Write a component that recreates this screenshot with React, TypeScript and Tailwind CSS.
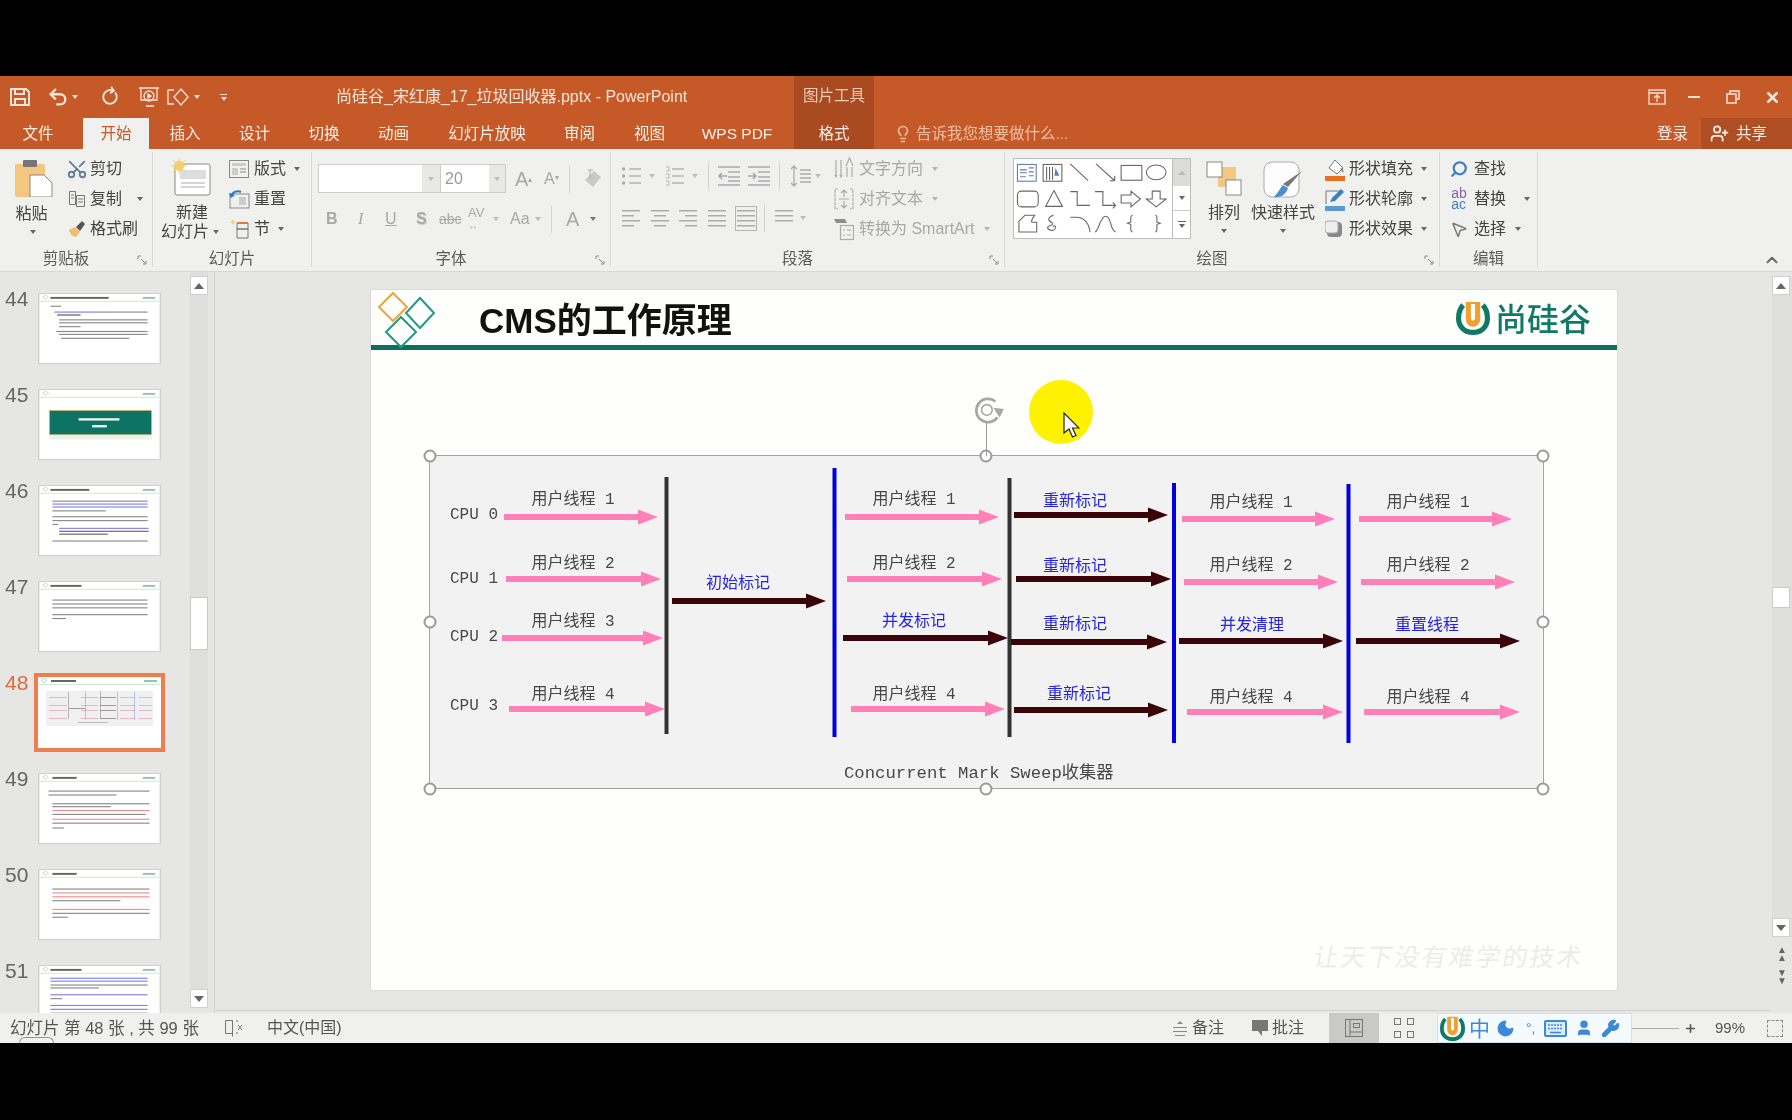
import { Moon, MousePointer2, Plus, RotateCcw, Scissors, Search, Undo2, User, UserPlus, Wrench, X, ChevronUp, Lightbulb } from "lucide-react";
import type { ReactNode } from "react";

const TABS = [
  { label: "文件", w: "w-[83px] pr-[7px]" },
  { label: "开始", w: "w-[66px]", active: true },
  { label: "插入", w: "w-[72px]" },
  { label: "设计", w: "w-[67px]" },
  { label: "切换", w: "w-[72px]" },
  { label: "动画", w: "w-[67px]" },
  { label: "幻灯片放映", w: "w-[120px]" },
  { label: "审阅", w: "w-[65px]" },
  { label: "视图", w: "w-[75px]" },
  { label: "WPS PDF", w: "w-[107px] pr-[7px]" },
];

function Caret({ color = "border-t-[#666]", className = "" }: { color?: string; className?: string }) {
  return <span className={`inline-block h-0 w-0 border-x-[3.5px] border-t-[4px] border-x-transparent ${color} ${className}`} />;
}

function ULogo({ size }: { size: number }) {
  return (
    <svg width={size} height={size} viewBox="0 0 33 33">
      <path d="M7 4C3 8 2.5 13 2.5 17c0 8 6 13.5 14 13.5S30.5 25 30.5 17c0-4-.5-9-4.500-13" fill="none" stroke="#0f7a64" strokeWidth="5" />
      <path d="M9.500 1h14v16c0 5-3 8-7 8s-7-3-7-8z" fill="#f0a030" />
      <path d="M14.500 3h4v13c0 2-1 3-2 3s-2-1-2-3z" fill="#fff" />
    </svg>
  );
}

/* ---------- thumbnails ---------- */

type Line = [number, number, number, string?];
const D = "#666";
const B = "#5a5ae8";
const R = "#ee6a6a";

const THUMB_LINES: Record<number, Line[]> = {
  44: [[11, 12, 11], [15, 18, 47, B], [62, 18, 49], [18, 21, 24, "#222"], [20, 26, 91], [20, 29, 91], [20, 33, 22], [17, 38, 94], [20, 41, 91], [22, 45, 70]],
  46: [[13, 15, 98], [13, 18, 98, B], [13, 21, 98, B], [13, 25, 55], [13, 31, 98], [13, 35, 98], [13, 39, 6], [20, 43, 92, B], [20, 46, 92, "#333"], [20, 49, 50, "#333"], [13, 56, 98]],
  47: [[13, 18, 98], [13, 22, 98], [13, 26, 98], [13, 33, 98], [13, 37, 14]],
  49: [[9, 17, 104], [9, 21, 70], [13, 30, 100], [13, 33, 60], [13, 37, 100, R], [13, 41, 96], [13, 46, 100, R], [13, 50, 100], [13, 55, 12]],
  50: [[13, 19, 100], [13, 23, 100, R], [13, 27, 100, R], [13, 31, 70], [13, 40, 100, R], [13, 44, 100], [13, 48, 16]],
  51: [[11, 12, 100, B], [11, 15, 100, B], [11, 19, 100], [11, 22, 50], [11, 29, 100, B], [11, 33, 12], [11, 40, 100, B], [11, 44, 100, B], [11, 48, 100], [11, 52, 100]],
};

const TITLE_W: Record<number, [number, number]> = {
  44: [11, 60], 45: [0, 0], 46: [11, 40], 47: [11, 32], 48: [13, 25], 49: [13, 25], 50: [13, 25], 51: [11, 32],
};

function ThumbArt({ n }: { n: number }) {
  const [tx, tw] = TITLE_W[n];
  return (
    <svg viewBox="0 0 123 71" className="h-full w-full">
      <rect width="123" height="71" fill="#fff" />
      <path d="M3 3l3-2 3 2-3 3z" fill="none" stroke="#9bcfc2" strokeWidth="0.7" />
      <rect x="0" y="7" width="123" height="1" fill="#cfe8df" />
      {tw > 0 && <rect x={tx} y="3" width={tw} height="2" fill="#666" />}
      <rect x="106" y="3" width="13" height="2" fill="#8fc8b0" />
      {(THUMB_LINES[n] ?? []).map(([x, y, w, c], i) => (
        <rect key={i} x={x} y={y} width={w} height="1.200" fill={c ?? D} opacity="0.75" />
      ))}
      {n === 45 && (
        <g>
          <rect x="10" y="44" width="105" height="7" fill="#d9ece6" opacity="0.6" />
          <rect x="10" y="21" width="105" height="25" fill="#0d7463" stroke="#d8b36a" strokeWidth="0.8" />
          <rect x="40" y="29" width="42" height="2.500" fill="#e6f2ee" />
          <rect x="54" y="36" width="15" height="2.500" fill="#e6f2ee" />
        </g>
      )}
      {n === 48 && (
        <g>
          <rect x="8" y="14" width="107" height="35" fill="#f0f0f0" />
          {[20, 28, 33, 41].map((y) => (
            <g key={y}>
              <rect x="11" y={y} width="18" height="0.700" fill="#e79ab8" />
              <rect x="43" y={y} width="17" height="0.700" fill="#e79ab8" />
              <rect x="62" y={y} width="16" height="0.700" fill="#777" />
              <rect x="82" y={y} width="15" height="0.700" fill="#e79ab8" />
              <rect x="101" y={y} width="13" height="0.700" fill="#e79ab8" />
            </g>
          ))}
          <rect x="31" y="31" width="16" height="0.700" fill="#777" />
          <rect x="30" y="15" width="0.500" height="27" fill="#777" />
          <rect x="47" y="14" width="0.500" height="28" fill="#88e" />
          <rect x="62" y="14" width="0.500" height="28" fill="#777" />
          <rect x="79" y="15" width="0.500" height="28" fill="#88e" />
          <rect x="96" y="15" width="0.500" height="28" fill="#88e" />
          <rect x="40" y="45" width="30" height="1" fill="#bbb" />
        </g>
      )}
    </svg>
  );
}

function ThumbList() {
  return (
    <div className="flex w-[190px] flex-col overflow-hidden pt-[21px]">
      {[44, 45, 46, 47, 48, 49, 50, 51].map((n) => (
        <div key={n} className="flex h-[96px] shrink-0 items-start">
          <span className={`-mt-[5px] w-[34px] pl-[5px] text-[21px] leading-[21px] ${n === 48 ? "text-[#e0683a]" : "text-[#666]"}`}>{n}</span>
          <div className={n === 48 ? "-my-1 h-[79px] w-[131px] shrink-0 border-4 border-[#ef7e4e]" : "ml-1 h-[71px] w-[123px] shrink-0 border border-[#cfcfcf]"}>
            <ThumbArt n={n} />
          </div>
        </div>
      ))}
    </div>
  );
}

function ScrollButton({ down }: { down?: boolean }) {
  return (
    <div className="flex h-[19px] w-[18px] items-center justify-center border border-[#cfcfcf] bg-white">
      <span className={`h-0 w-0 border-x-[5px] border-x-transparent ${down ? "border-t-[6px] border-t-[#666]" : "border-b-[6px] border-b-[#666]"}`} />
    </div>
  );
}

/* ---------- ribbon ---------- */

function Launcher() {
  return (
    <svg width="10" height="10" viewBox="0 0 10 10" className="absolute bottom-[2px] right-[5px]">
      <path d="M1 4V1h3M9 6v3H6M4 4l4 4" fill="none" stroke="#888" strokeWidth="1" />
    </svg>
  );
}

function Group({ w, label, launcher, children }: { w: string; label?: string; launcher?: boolean; children?: ReactNode }) {
  return (
    <div className={`relative flex h-[115px] shrink-0 flex-col border-r border-[#d9dad8] ${w}`}>
      <div className="-mt-[3px] flex h-[100px] shrink-0 pt-[1px]">{children}</div>
      <div className={`text-center text-[15.500px] leading-[20px] text-[#5a5a5a] ${launcher ? "pr-[20px]" : ""}`}>{label}</div>
      {launcher && <Launcher />}
    </div>
  );
}

function SmallRow({ icon, label, caret, gap = "gap-[4px]", muted, iconW = "w-[24px]" }: { icon: ReactNode; label: string; caret?: string; gap?: string; muted?: boolean; iconW?: string }) {
  return (
    <div className={`flex h-[30px] items-center ${gap} text-[16px] ${muted ? "text-[#a8a8a8]" : "text-[#444]"}`}>
      <span className={`flex ${iconW} shrink-0 items-center justify-center`}>{icon}</span>
      <span className="whitespace-nowrap">{label}</span>
      {caret && <Caret className={caret} color={muted ? "border-t-[#b5b5b5]" : "border-t-[#666]"} />}
    </div>
  );
}

const GRAY = "#ababab";

function ListIcon({ numbered }: { numbered?: boolean }) {
  return (
    <svg width="19" height="22" fill="none" stroke={GRAY} strokeWidth="1.300">
      {[4, 11, 18].map((y) => (
        <g key={y}>
          {numbered ? <path d={`M1 ${y - 2}h3v4H1`} strokeWidth="0.800" /> : <rect x="0" y={y - 1.500} width="3" height="3" fill={GRAY} stroke="none" />}
          <path d={`M7 ${y}h12`} />
        </g>
      ))}
    </svg>
  );
}

function IndentIcon({ out }: { out?: boolean }) {
  return (
    <svg width="22" height="22" fill="none" stroke={GRAY} strokeWidth="1.300">
      <path d="M0 2h22M10 7h12M10 12h12M10 16h12M0 20h22" />
      <path d={out ? "M9 11H1M4 8l-3 3 3 3" : "M0 11h8M5 8l3 3-3 3"} stroke="#a0a8b0" strokeWidth="1.600" />
    </svg>
  );
}

function SpacingIcon() {
  return (
    <svg width="21" height="22" fill="none" stroke={GRAY} strokeWidth="1.300">
      <path d="M4 1v20M1 4l3-3 3 3M1 18l3 3 3-3M10 5h11M10 9h11M10 13h11M10 17h11" />
    </svg>
  );
}

function AlignIcon({ widths, justify }: { widths: number[]; justify: number }) {
  return (
    <svg width="18" height="17">
      {widths.map((w, i) => (
        <rect key={i} x={justify * (18 - w)} y={i * 5} width={w} height="1.500" fill={GRAY} />
      ))}
    </svg>
  );
}

function ClipboardGroup() {
  return (
    <Group w="w-[153px]" label="剪贴板" launcher>
      <div className="flex w-[65px] flex-col items-center pl-[4px] pt-[9px] text-[16px] text-[#444]">
        <svg width="38" height="38" viewBox="0 0 38 38" className="-ml-[2px]">
          <rect x="0" y="5" width="30" height="33" rx="2" fill="#f3c77f" />
          <rect x="8" y="1" width="14" height="7" rx="1" fill="#777" />
          <path d="M15 16h14l8 8v14H15z" fill="#fff" stroke="#888" strokeWidth="1" />
        </svg>
        <span className="mt-[7px] -ml-[6px] leading-[20px]">粘贴</span>
        <Caret className="mt-[6px] -ml-[4px]" />
      </div>
      <div className="flex flex-col pt-[4px]">
        <SmallRow icon={<Scissors size={22} className="-rotate-90 text-[#5f7f9f]" />} label="剪切" gap="gap-[1px]" />
        <SmallRow
          icon={
            <svg width="20" height="18" fill="none" stroke="#777">
              <path d="M2.500 1.500h6v13h-6zM9.500 5.500h8v11h-8zM4 5h3M4 8h3M11 9h5M11 12h5" />
            </svg>
          }
          label="复制"
          caret="ml-[14px]"
          gap="gap-[1px]"
        />
        <SmallRow
          icon={
            <svg width="20" height="18">
              <path d="M2 10l6-3 5 5-4 5C6 17 3 14 2 10z" fill="#efbe6c" />
              <path d="M9 7l6-6 3 3-5 7z" fill="#555" />
            </svg>
          }
          label="格式刷"
          gap="gap-[1px]"
        />
      </div>
    </Group>
  );
}

function SlidesGroup() {
  return (
    <Group w="w-[159px]" label="幻灯片">
      <div className="flex w-[75px] flex-col pl-[8px] pt-[8px] text-[16px] leading-[19px] text-[#444]">
        <svg width="40" height="38" viewBox="0 0 40 38" className="ml-[10px]">
          <rect x="4" y="6" width="35" height="31" rx="2" fill="#fff" stroke="#888" />
          <rect x="9" y="12" width="26" height="9" fill="#ddd" />
          <path d="M10 25h24M10 29h24" stroke="#aaa" />
          <circle cx="8" cy="8" r="5" fill="#f4cf6a" />
          <path d="M8 0v16M0 8h16M2 2l12 12M14 2L2 14" stroke="#f4cf6a" />
        </svg>
        <span className="mt-[7px] pl-[15px]">新建</span>
        <span className="flex items-center gap-[4px] whitespace-nowrap">
          幻灯片
          <Caret />
        </span>
      </div>
      <div className="flex flex-col pt-[4px]">
        <SmallRow
          icon={
            <svg width="22" height="20" fill="none" stroke="#888">
              <rect x="1.500" y="1.500" width="19" height="17" />
              <rect x="4" y="4" width="14" height="3" fill="#ccc" stroke="none" />
              <rect x="4" y="9" width="6" height="7" fill="#ccc" stroke="none" />
              <path d="M12 10h6M12 13h6" />
            </svg>
          }
          label="版式"
          caret="ml-[4px]"
          iconW="w-[22px]"
        />
        <SmallRow
          icon={
            <svg width="22" height="20" fill="none">
              <rect x="2" y="5" width="19" height="14" stroke="#888" />
              <rect x="11" y="8" width="7" height="8" fill="#ccc" />
              <path d="M3 8c1-5 6-7 10-5" stroke="#2f78c0" strokeWidth="2" />
              <path d="M1 4l2 5 4-3z" fill="#2f78c0" />
            </svg>
          }
          label="重置"
          iconW="w-[22px]"
        />
        <SmallRow
          icon={
            <svg width="22" height="22" fill="none">
              <path d="M5 1l1 2 2 1-2 1-1 2-1-2-2-1 2-1z" fill="#f4cf6a" />
              <path d="M9 5h11v6H9zM9 11h11v9H9z" stroke="#777" />
              <rect x="9" y="4" width="11" height="2" fill="#e8743b" />
            </svg>
          }
          label="节"
          caret="ml-[4px]"
          iconW="w-[22px]"
        />
      </div>
    </Group>
  );
}

function FontGroup() {
  return (
    <Group w="w-[299px]" label="字体" launcher>
      <div className="flex flex-col pl-[6px] pt-[14px] text-[#a8a8a8]">
        <div className="flex h-[29px] items-center">
          <div className="flex h-[29px] w-[123px] justify-end border border-[#cccccc] bg-white">
            <span className="flex w-[18px] items-center justify-center bg-[#e8e8e6]"><Caret color="border-t-[#bbb]" /></span>
          </div>
          <div className="flex h-[29px] w-[65px] items-center justify-between border-y border-r border-[#cccccc] bg-white pl-[4px] text-[16px] text-[#9a9a9a]">
            20
            <span className="flex h-full w-[16px] items-center justify-center bg-[#e8e8e6]"><Caret color="border-t-[#bbb]" /></span>
          </div>
          <span className="ml-[9px] w-[17px] text-[20px]">A<sup className="text-[8px]">▴</sup></span>
          <span className="ml-[12px] w-[15px] text-[16px]">A<sup className="text-[8px]">▾</sup></span>
          <span className="ml-[10px] h-[28px] w-px bg-[#d5d5d5]" />
          <svg width="20" height="20" className="ml-[13px]">
            <path d="M2 11L11 2l7 6-8 10z" fill="#c9c9c9" />
            <path d="M5 1h5M7 1v9" stroke="#aab" />
          </svg>
        </div>
        <div className="mt-[11px] flex h-[30px] items-center text-[16px]">
          <span className="ml-[8px] w-[10px] font-bold">B</span>
          <span className="ml-[22px] w-[8px] font-['Liberation_Serif',serif] italic">I</span>
          <span className="ml-[19px] w-[12px] underline">U</span>
          <span className="ml-[19px] w-[11px] font-bold [text-shadow:1px_1px_1px_#ccc]">S</span>
          <span className="ml-[12px] w-[21px] text-[14px] line-through">abc</span>
          <span className="ml-[8px] w-[18px] text-[13px] leading-[12px]">AV<br /><span className="text-[10px]">↔</span></span>
          <Caret className="ml-[7px]" color="border-t-[#bbb]" />
          <span className="ml-[11px] w-[21px]">Aa</span>
          <Caret className="ml-[4px]" color="border-t-[#bbb]" />
          <span className="ml-[10px] h-[28px] w-px bg-[#d5d5d5]" />
          <span className="ml-[14px] w-[12px] text-[20px]">A</span>
          <Caret className="ml-[12px]" color="border-t-[#777]" />
        </div>
      </div>
    </Group>
  );
}

function ParagraphGroup() {
  const muted = "border-t-[#bcbcbc]";
  return (
    <Group w="w-[394px]" label="段落" launcher>
      <div className="flex w-[223px] flex-col pl-[11px] pt-[11px]">
        <div className="flex h-[30px] items-center">
          <ListIcon />
          <Caret className="ml-[8px]" color={muted} />
          <span className="ml-[10px] flex"><ListIcon numbered /></span>
          <Caret className="ml-[8px]" color={muted} />
          <span className="ml-[10px] h-[28px] w-px bg-[#d5d5d5]" />
          <span className="ml-[9px] flex"><IndentIcon out /></span>
          <span className="ml-[8px] flex"><IndentIcon /></span>
          <span className="ml-[9px] h-[28px] w-px bg-[#d5d5d5]" />
          <span className="ml-[10px] flex"><SpacingIcon /></span>
          <Caret className="ml-[4px]" color={muted} />
        </div>
        <div className="mt-[12px] flex h-[30px] items-center">
          <AlignIcon widths={[18, 12, 18, 12]} justify={0} />
          <span className="ml-[11px] flex"><AlignIcon widths={[18, 12, 18, 12]} justify={0.5} /></span>
          <span className="ml-[10px] flex"><AlignIcon widths={[18, 12, 18, 12]} justify={1} /></span>
          <span className="ml-[11px] flex"><AlignIcon widths={[18, 18, 18, 18]} justify={0} /></span>
          <span className="ml-[9px] flex border border-[#b5b5b5] px-[1px] py-[3px]"><AlignIcon widths={[18, 18, 18, 18]} justify={0} /></span>
          <span className="ml-[7px] h-[28px] w-px bg-[#d5d5d5]" />
          <span className="ml-[10px] flex"><AlignIcon widths={[18, 18, 18]} justify={0} /></span>
          <Caret className="ml-[7px]" color={muted} />
        </div>
      </div>
      <div className="flex flex-col pt-[4px]">
        <SmallRow
          muted
          icon={
            <svg width="20" height="24" fill="none" stroke={GRAY} strokeWidth="1.200">
              <path d="M2 3v17M7 3v17M18 10v10M13 10v10M1 18l1 2 1-2M6 18l1 2 1-2" />
              <path d="M12 9l3.500-8L19 9" />
            </svg>
          }
          label="文字方向"
          caret="ml-[4px]"
          iconW="w-[20px]"
          gap="gap-[5px]"
        />
        <SmallRow
          muted
          icon={
            <svg width="20" height="24" fill="none" stroke={GRAY} strokeWidth="1.200">
              <path d="M4 2H1v20h3M16 2h3v20h-3" strokeDasharray="3 1" />
              <path d="M10 3v7M7 6l3-3 3 3M10 21v-7M7 18l3 3 3-3M5 12h10" />
            </svg>
          }
          label="对齐文本"
          caret="ml-[4px]"
          iconW="w-[20px]"
          gap="gap-[5px]"
        />
        <SmallRow
          muted
          icon={
            <svg width="20" height="24" fill="none" stroke={GRAY} strokeWidth="1.200">
              <path d="M0 2h11l2 4H2z" fill="#8e8e8e" stroke="none" />
              <rect x="6.500" y="8.500" width="13" height="14" />
              <path d="M9 13h2M13 13h4M9 18h2M13 18h4" />
            </svg>
          }
          label="转换为 SmartArt"
          caret="ml-[4px]"
          iconW="w-[20px]"
          gap="gap-[5px]"
        />
      </div>
    </Group>
  );
}

function ShapeGallery() {
  return (
    <div className="ml-[8px] mt-[8px] flex h-[81px]">
      <div className="h-[81px] w-[160px] border border-[#bdbdbd] bg-white">
        <svg width="158" height="79" viewBox="0 0 160 80" fill="none" stroke="#666" strokeWidth="1.100">
          <rect x="3.500" y="5.500" width="19" height="17" stroke="#5e7fae" />
          <path d="M6 11h7M6 14h7M15 9h5M15 13h5M15 17h5M6 18h6" stroke="#5e7fae" />
          <rect x="29.500" y="5.500" width="19" height="17" />
          <path d="M33 8v13M36 8v13M39 8v13" />
          <path d="M42 9l4 8h-5z" fill="#5e7fae" stroke="none" />
          <path d="M57 5l18 17M83 5l19 17M102 22h-5M102 22v-5" />
          <rect x="108.500" y="6.500" width="21" height="15" />
          <ellipse cx="144" cy="13.500" rx="10" ry="7.500" />
          <rect x="3.500" y="32.500" width="21" height="16" rx="4" />
          <path d="M40.500 32l8.500 16H32z" />
          <path d="M57 33h7v14h13M82 33h8v14h13M103 47l-3-3M103 47l-3 3" />
          <path d="M108.500 36.500h10v-4l9.500 8-9.500 8v-4h-10zM140 32.500h8v8h6l-10 8-10-8h6z" />
          <path d="M5 74V63l6-6h10c-2 3-4 5-3 7h5v10z" />
          <path d="M40 57c-6 2-6 5-2 7 4 3-3 3-4 5 0 3 6 5 8 1 1-3-3-3-2-1" />
          <path d="M57 59h6c8 0 13 6 14 15M82 74c4-1 5-16 11-16 6 0 4 15 10 16" />
          <path d="M120 57c-3 0-1 7-2 7l-3 1 3 1c1 0-1 8 2 8M143 57c3 0 1 7 2 7l3 1-3 1c-1 0 1 8-2 8" />
        </svg>
      </div>
      <div className="flex w-[18px] flex-col border-y border-r border-[#bdbdbd]">
        <span className="flex h-[27px] items-center justify-center bg-[#dcdcda]"><span className="h-0 w-0 border-x-[4px] border-b-[4px] border-x-transparent border-b-[#bbb]" /></span>
        <span className="flex h-[25px] items-center justify-center border-b border-[#ccc] bg-white"><Caret /></span>
        <span className="flex flex-1 flex-col items-center justify-center gap-[2px] bg-white"><span className="h-px w-[8px] bg-[#666]" /><Caret /></span>
      </div>
    </div>
  );
}

function DrawingGroup() {
  return (
    <Group w="w-[435px]" label="绘图" launcher>
      <ShapeGallery />
      <div className="ml-[11px] flex w-[44px] flex-col items-center pt-[11px] text-[16px] text-[#444]">
        <svg width="36" height="35">
          <rect x="12" y="6" width="18" height="20" fill="#f3c77f" />
          <rect x="1" y="1" width="15" height="15" fill="#fff" stroke="#888" />
          <rect x="20" y="19" width="15" height="15" fill="#fff" stroke="#888" />
        </svg>
        <span className="mt-[7px] leading-[20px]">排列</span>
        <Caret className="mt-[6px]" />
      </div>
      <div className="ml-[5px] flex w-[64px] flex-col items-center pt-[11px] text-[16px] text-[#444]">
        <svg width="40" height="38">
          <rect x="1" y="1" width="35" height="35" rx="8" fill="#fdfdfd" stroke="#aaa" />
          <path d="M39 10l-14 16-5-3z" fill="#777" />
          <path d="M20 24c-3 3-5 8-9 12 6 1 12-2 14-9z" fill="#4c8fd0" />
        </svg>
        <span className="mt-[4px] whitespace-nowrap leading-[20px]">快速样式</span>
        <Caret className="mt-[6px]" />
      </div>
      <div className="ml-[10px] flex flex-col pt-[4px]">
        <SmallRow
          icon={
            <svg width="20" height="23">
              <path d="M10 2l8 8-6 6-8-6z" fill="#fff" stroke="#777" />
              <path d="M15 10c3 0 4 3 3 5z" fill="#777" />
              <rect x="0" y="18" width="20" height="5" fill="#e8701f" />
            </svg>
          }
          label="形状填充"
          caret="ml-[4px]"
          iconW="w-[20px]"
        />
        <SmallRow
          icon={
            <svg width="20" height="23" fill="none">
              <path d="M1 16V3h13" stroke="#777" />
              <path d="M5 14l2-4 9-9 3 3-9 9z" fill="#3f7fbf" />
              <rect x="0" y="18" width="20" height="5" fill="#5b9ad6" />
            </svg>
          }
          label="形状轮廓"
          caret="ml-[4px]"
          iconW="w-[20px]"
        />
        <SmallRow
          icon={
            <svg width="20" height="20">
              <rect x="2" y="3" width="15" height="15" rx="4" fill="#888" />
              <rect x="0" y="2" width="13" height="12" rx="3" fill="#eee" stroke="#aaa" />
            </svg>
          }
          label="形状效果"
          caret="ml-[4px]"
          iconW="w-[20px]"
        />
      </div>
    </Group>
  );
}

function EditGroup() {
  return (
    <Group w="w-[98px]" label="编辑">
      <div className="flex flex-col pl-[10px] pt-[4px]">
        <SmallRow icon={<Search size={18} strokeWidth={3} className="-scale-x-100 text-[#3f7fbf]" />} label="查找" gap="gap-[6px]" iconW="w-[18px]" />
        <SmallRow
          icon={
            <span className="font-['Liberation_Sans',sans-serif] text-[14px] leading-[11px]">
              <span className="block text-[#8a5fb0]">ab</span>
              <span className="block text-[#3f7fbf]">ac</span>
            </span>
          }
          label="替换"
          caret="ml-[12px]"
          gap="gap-[6px]"
          iconW="w-[18px]"
        />
        <SmallRow icon={<MousePointer2 size={19} className="text-[#777]" />} label="选择" caret="ml-[3px]" gap="gap-[6px]" iconW="w-[18px]" />
      </div>
    </Group>
  );
}

/* ---------- diagram ---------- */

const PINK = "#ff80b6";
const DARK = "#3a0508";

const ARROWS: [number, number, number, string][] = [
  [505, 659, 517, PINK], [507, 662, 579, PINK], [503, 664, 638, PINK], [510, 666, 709, PINK],
  [673, 827, 601, DARK],
  [846, 1000, 517, PINK], [848, 1003, 579, PINK], [844, 1009, 638, DARK], [852, 1006, 709, PINK],
  [1015, 1169, 515, DARK], [1017, 1172, 579, DARK], [1012, 1168, 642, DARK], [1015, 1169, 710, DARK],
  [1183, 1336, 519, PINK], [1185, 1339, 582, PINK], [1180, 1344, 641, DARK], [1188, 1344, 712, PINK],
  [1360, 1513, 519, PINK], [1362, 1516, 582, PINK], [1357, 1521, 641, DARK], [1365, 1521, 712, PINK],
];

const BARS: [number, number, number, string][] = [
  [667.5, 477, 734, "#333"], [835.5, 468, 737, "#0000e0"], [1010.5, 478, 737, "#333"], [1175, 483, 743, "#0000e0"], [1349.5, 484, 743, "#0000e0"],
];

const LABELS: [string, number, number, boolean][] = [
  ["CPU 0", 475, 515, false], ["CPU 1", 475, 579, false], ["CPU 2", 475, 637, false], ["CPU 3", 475, 706, false],
  ["用户线程 1", 574, 500, false], ["用户线程 2", 574, 564, false], ["用户线程 3", 574, 622, false], ["用户线程 4", 574, 695, false],
  ["初始标记", 739, 584, true],
  ["用户线程 1", 915, 500, false], ["用户线程 2", 915, 564, false], ["并发标记", 915, 622, true], ["用户线程 4", 915, 695, false],
  ["重新标记", 1076, 502, true], ["重新标记", 1076, 567, true], ["重新标记", 1076, 625, true], ["重新标记", 1080, 695, true],
  ["用户线程 1", 1252, 503, false], ["用户线程 2", 1252, 566, false], ["并发清理", 1253, 626, true], ["用户线程 4", 1252, 698, false],
  ["用户线程 1", 1429, 503, false], ["用户线程 2", 1429, 566, false], ["重置线程", 1428, 626, true], ["用户线程 4", 1429, 698, false],
];

const HANDLES = [
  [-0.5, -0.5], [556, -0.5], [1113, -0.5], [-0.5, 166], [1113, 166], [-0.5, 332.5], [556, 332.5], [1113, 332.5],
];

function Diagram() {
  return (
    <div className="relative ml-[58px] mt-[105px] h-[334px] w-[1115px] border border-[#a3a3a3] bg-[#f2f2f2] font-['Liberation_Mono','Noto_Sans_CJK_SC',monospace] text-[16px]">
      <svg viewBox="431 456 1113 332" width="1113" height="332" className="absolute left-0 top-0">
        {BARS.map(([x, y1, y2, c]) => (
          <rect key={x} x={x - 2} y={y1} width="4" height={y2 - y1} fill={c} />
        ))}
        {ARROWS.map(([x1, x2, y, c]) => (
          <path key={`${x1}-${y}`} d={`M${x1} ${y - 3}H${x2 - 20}V${y - 7.5}L${x2} ${y}L${x2 - 20} ${y + 7.5}V${y + 3}H${x1}Z`} fill={c} />
        ))}
      </svg>
      {LABELS.map(([text, x, y, mark], i) => (
        <span
          key={i}
          className={`absolute -translate-x-1/2 -translate-y-1/2 whitespace-pre leading-none ${mark ? "text-[#2424e0]" : "text-[#484848]"}`}
          style={{ left: x - 431, top: y - 456 }}
        >
          {text}
        </span>
      ))}
      <span className="absolute bottom-[4px] left-[414px] whitespace-pre text-[17.300px] leading-[20px] text-[#484848]">Concurrent Mark Sweep收集器</span>
      {HANDLES.map(([x, y]) => (
        <span key={`${x}-${y}`} className="absolute h-[13px] w-[13px] -translate-x-[6.500px] -translate-y-[6.500px] rounded-full border-2 border-[#9a9a9a] bg-white" style={{ left: x, top: y }} />
      ))}
      {/* rotate handle */}
      <span className="absolute -top-[34px] left-[556px] h-[34px] w-px bg-[#9a9a9a]" />
      <svg width="34" height="30" viewBox="0 0 32 28" fill="none" stroke="#a6a6a6" className="absolute -top-[60px] left-[542px]">
        <path d="M22 5a11 11 0 1 0 2 15" strokeWidth="2.500" />
        <circle cx="14" cy="13" r="5" strokeWidth="1.500" />
        <path d="M20 11l10 1-4 8z" fill="#a6a6a6" stroke="none" />
      </svg>
    </div>
  );
}

function Slide() {
  return (
    <div className="relative h-[702px] w-[1248px] border border-[#d9d9d9] bg-[#fefefc]">
      <div className="flex h-[60px] items-start border-b-[5px] border-[#0f6f5e] font-['Liberation_Sans','Noto_Sans_CJK_SC',sans-serif]">
        <svg width="60" height="56" viewBox="0 0 60 56" className="ml-[6px] mt-[2px] shrink-0 overflow-visible" fill="none" strokeWidth="2">
          <path d="M16 1l14 14-14 14L2 15z" stroke="#eda53b" />
          <path d="M43 6l14 15-14 15-14-15z" stroke="#1f9a88" />
          <path d="M24 25l15 15-15 15L9 40z" stroke="#1f9a88" />
        </svg>
        <h1 className="ml-[42px] mt-[9px] whitespace-nowrap text-[35px] font-bold leading-[44px] text-[#111]">CMS的工作原理</h1>
        <div className="ml-auto mr-[26px] mt-[11px] flex items-center gap-[5px]">
          <ULogo size={34} />
          <span className="-mt-[2px] font-['Noto_Sans_CJK_SC',sans-serif] text-[32px] font-medium leading-[34px] text-[#0f7a64]">尚硅谷</span>
        </div>
      </div>
      <Diagram />
      <span className="absolute bottom-[16px] right-[33px] skew-x-[-10deg] font-['Noto_Sans_CJK_SC',sans-serif] text-[25px] tracking-[2px] text-[#ebebe8]">让天下没有难学的技术</span>
      {/* presenter's pointer highlight */}
      <div className="absolute left-[658px] top-[90px] h-[64px] w-[64px] rounded-full bg-[#fff200]" />
      <svg width="17" height="26" viewBox="0 0 17 26" className="absolute left-[692px] top-[122px]">
        <path d="M1 1v20l5-4 3.500 8 3.500-1.500L9.500 16H16z" fill="#fff" stroke="#222" strokeWidth="1.200" />
      </svg>
    </div>
  );
}

function StatusBar() {
  return (
    <div className="relative flex h-[30px] items-center bg-[#f0f1ef] text-[16px] text-[#555]">
      <span className="ml-[10px] w-[214px] whitespace-nowrap text-[16.500px]">幻灯片 第 48 张 , 共 99 张</span>
      <svg width="20" height="18" fill="none" stroke="#777" className="shrink-0">
        <path d="M1.500 1.500h7v13h-7zM8.500 1.500v16M12 2h2M12 14h2M14 6l4 5M18 6l-4 5" />
      </svg>
      <span className="ml-[23px] w-[75px] whitespace-nowrap">中文(中国)</span>
      <span className="ml-[827px] flex w-[22px] flex-col items-center gap-[3px]">
        <span className="h-0 w-0 border-x-[3px] border-b-[3px] border-x-transparent border-b-[#888]" />
        <span className="h-px w-[14px] bg-[#888]" />
        <span className="h-px w-[14px] bg-[#888]" />
        <span className="h-px w-[10px] bg-[#888]" />
      </span>
      <span className="ml-[1px] w-[59px]">备注</span>
      <svg width="18" height="18" className="shrink-0"><path d="M1 1h16v11h-6v5l-4-5H1z" fill="#777" /></svg>
      <span className="ml-[3px] w-[57px]">批注</span>
      <span className="flex h-full w-[50px] items-center justify-center bg-[#c9c9c7]">
        <svg width="20" height="20" fill="none" stroke="#777"><rect x="1.500" y="1.500" width="17" height="17" /><path d="M6 2v16M6 14h12" /><rect x="9.500" y="5.500" width="6" height="4" /></svg>
      </span>
      <span className="ml-[15px] grid w-[20px] grid-cols-2 gap-[6px]">
        {[0, 1, 2, 3].map((i) => <span key={i} className="h-[7px] w-[7px] border border-[#777]" />)}
      </span>
      <div className="ml-[23px] flex h-[30px] w-[195px] items-center border border-[#cfe0ee] bg-[#f4fafe] pl-[2px] text-[#3b8ad9]">
        <ULogo size={25} />
        <span className="ml-[4px] text-[21px] leading-none">中</span>
        <Moon size={19} className="ml-[6px] fill-[#3b8ad9]" />
        <span className="ml-[11px] text-[14px] leading-none">°,</span>
        <svg width="23" height="17" className="ml-[8px] shrink-0">
          <rect x="1" y="1" width="21" height="15" rx="1" fill="#dcecfa" stroke="#3b8ad9" strokeWidth="2" />
          <path d="M4 5h15M4 8.500h15" stroke="#3b8ad9" strokeWidth="1.500" strokeDasharray="2 1" />
          <path d="M6 12.500h11" stroke="#3b8ad9" strokeWidth="1.500" />
        </svg>
        <User size={18} className="ml-[8px] fill-[#3b8ad9]" />
        <Wrench size={19} className="ml-[8px] fill-[#3b8ad9]" />
      </div>
      <span className="h-px w-[47px] bg-[#aaa]" />
      <Plus size={13} strokeWidth={3} className="ml-[5px] text-[#555]" />
      <span className="ml-[18px] w-[34px] text-[15px]">99%</span>
      <span className="ml-[18px] h-[17px] w-[16px] border border-dashed border-[#888]" />
      <span className="absolute bottom-0 left-[19px] h-[6px] w-[35px] rounded-t-full border-x border-t border-[#7b9bb8]" />
    </div>
  );
}

export default function App() {
  return (
    <div className="flex h-[1120px] w-[1792px] flex-col overflow-hidden bg-black font-['Liberation_Sans','Noto_Sans_CJK_SC',sans-serif] blur-[0.4px]">
      <div className="h-[76px] shrink-0" />

      {/* title bar */}
      <div className="flex h-[42px] shrink-0 bg-[#c55a28] text-[#f6e4d9]">
        <div className="flex w-[794px] items-center">
          <svg width="20" height="18" viewBox="0 0 20 18" fill="none" stroke="#f6e4d9" strokeWidth="2" className="ml-[10px]">
            <path d="M1 1h15l3 3v13H1zM5 1v5h9V1M5 17v-6h10v6" />
          </svg>
          <Undo2 size={22} strokeWidth={2.5} className="ml-[17px]" />
          <Caret color="border-t-[#f6e4d9]" className="ml-[3px]" />
          <RotateCcw size={18} strokeWidth={2.5} className="ml-[23px] -scale-x-100 rotate-[-35deg]" />
          <svg width="22" height="22" fill="none" stroke="#f6e4d9" strokeWidth="1.300" className="ml-[19px]">
            <path d="M1 2h20M3 2v12h16V2M8 20h8" />
            <circle cx="11" cy="10" r="5" />
            <path d="M10 8l3 2-3 2z" fill="#f6e4d9" />
          </svg>
          <svg width="24" height="22" fill="none" stroke="#f6e4d9" strokeWidth="1.300" className="ml-[6px]">
            <path d="M8 4H2v14h6M15 3l7 8-7 8-7-8z" />
          </svg>
          <Caret color="border-t-[#f6e4d9]" className="ml-[4px]" />
          <span className="ml-[20px] flex flex-col items-center gap-[2px]">
            <span className="h-px w-[7px] bg-[#f6e4d9]" />
            <Caret color="border-t-[#f6e4d9]" />
          </span>
          <span className="ml-[109px] whitespace-nowrap text-[16px]">尚硅谷_宋红康_17_垃圾回收器.pptx - PowerPoint</span>
        </div>
        <div className="flex w-[80px] items-end justify-center bg-[#a94a20] pb-[11px] text-[15.500px] text-[#eccbb8]">图片工具</div>
        <div className="ml-auto flex items-center pr-[11px]">
          <svg width="18" height="16" fill="none" stroke="#f6e4d9" strokeWidth="1.300">
            <rect x="1" y="1" width="16" height="14" />
            <path d="M1 4h16M9 13V7M6 9l3-3 3 3" />
          </svg>
          <span className="ml-[22px] h-[2.500px] w-[12px] bg-[#f6e4d9]" />
          <svg width="14" height="14" fill="none" stroke="#f6e4d9" strokeWidth="1.500" className="ml-[26px]">
            <path d="M4 4V1h9v8h-3M1 4h9v9H1z" />
          </svg>
          <X size={17} strokeWidth={3.500} className="ml-[24px]" />
        </div>
      </div>

      {/* tabs */}
      <div className="flex h-[31px] shrink-0 bg-[#c55a28] text-[15.500px] text-[#fbeee6]">
        <div className="flex w-[794px]">
          {TABS.map((t) => (
            <div key={t.label} className={`flex ${t.w} items-center justify-center ${t.active ? "bg-[#f0f1ef] text-[#c55a28]" : ""}`}>
              {t.label}
            </div>
          ))}
        </div>
        <div className="flex w-[80px] items-center justify-center bg-[#a94a20]">格式</div>
        <div className="ml-[20px] flex items-center text-[#efbfa4]">
          <Lightbulb size={18} />
          <span className="ml-[4px] whitespace-nowrap">告诉我您想要做什么...</span>
        </div>
        <div className="ml-auto flex items-center">
          <span className="mr-[13px]">登录</span>
          <div className="flex h-full w-[91px] items-center bg-[#ae4e22] pl-[9px]">
            <UserPlus size={19} strokeWidth={2.2} />
            <span className="ml-[7px]">共享</span>
          </div>
        </div>
      </div>

      {/* ribbon */}
      <div className="relative flex h-[123px] shrink-0 items-start border-b border-[#d8d9d7] bg-[#f0f1ef] pt-[3px]">
        <ClipboardGroup />
        <SlidesGroup />
        <FontGroup />
        <ParagraphGroup />
        <DrawingGroup />
        <EditGroup />
        <ChevronUp size={18} strokeWidth={2.5} className="absolute bottom-[2px] right-[11px] text-[#666]" />
      </div>

      {/* workspace */}
      <div className="flex h-[741px] shrink-0 overflow-hidden bg-[#e6e7e5]">
        <div className="flex h-full w-[215px] shrink-0 border-r border-[#d5d6d4]">
          <ThumbList />
          <div className="flex h-[736px] w-[18px] flex-col justify-between bg-[#dfe0de] pt-[4px]">
            <ScrollButton />
            <div className="absolute top-[597px] h-[53px] w-[18px] border border-[#c9c9c9] bg-white" />
            <ScrollButton down />
          </div>
        </div>
        <div className="h-[739px] w-[1556px] shrink-0 border-b border-[#d0d1cf] pl-[155px] pt-[17px]">
          <Slide />
        </div>
        <div className="relative flex w-[21px] flex-col pl-[1px] pt-[4px]">
          <div className="flex h-[661px] flex-col justify-between bg-[#dfe0de]">
            <ScrollButton />
            <div className="absolute top-[315px] h-[21px] w-[18px] border border-[#c9c9c9] bg-white" />
            <ScrollButton down />
          </div>
          <span className="mt-[9px] flex flex-col items-center text-[10px] leading-[8px] text-[#666]">▲<br />▲</span>
          <span className="mt-[7px] flex flex-col items-center text-[10px] leading-[8px] text-[#666]">▼<br />▼</span>
        </div>
      </div>

      <StatusBar />
    </div>
  );
}
